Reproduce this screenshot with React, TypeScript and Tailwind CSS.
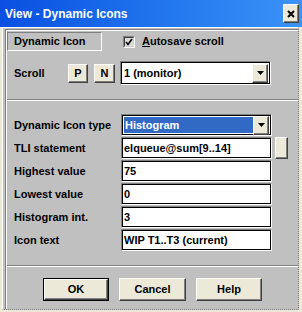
import React from "react";

const font = { fontFamily: '"Liberation Sans", Arial, sans-serif' };

const raised =
  "bg-[#ECE9D8] border border-white border-r-[#404040] border-b-[#404040] shadow-[inset_-1px_-1px_0_#808080]";

function Arrow() {
  return (
    <div className={`${raised} w-[16px] h-[19px] flex items-center justify-center shrink-0`}>
      <svg width="7" height="4" viewBox="0 0 7 4">
        <polygon points="0,0 7,0 3.5,4" fill="#000" />
      </svg>
    </div>
  );
}

function Combo({ text, selected, h }: { text: string; selected?: boolean; h: string }) {
  return (
    <div className={`w-[151px] ${h} border border-[#808080] border-r-white border-b-white flex`}>
      <div className="flex-1 border border-black bg-white flex items-center pl-[1px] pr-[1px]">
        <div
          className={`flex-1 h-[16px] flex items-center pl-[1px] text-[11px] font-bold ${
            selected ? "bg-[#316AC5] text-white" : "text-black"
          }`}
        >
          {text}
        </div>
        <Arrow />
      </div>
    </div>
  );
}

function Field({ text }: { text: string }) {
  return (
    <div className="w-[151px] h-[22px] border border-[#808080] border-r-white border-b-white flex">
      <div className="flex-1 border border-black bg-white flex items-center pl-[1px] text-[11px] font-bold text-black">
        {text}
      </div>
    </div>
  );
}

function Row({ label, children }: { label: string; children: React.ReactNode }) {
  return (
    <div className="flex items-center h-[22px] pl-[7px]">
      <div className="w-[107px] text-[11px] font-bold text-black">{label}</div>
      {children}
    </div>
  );
}

export default function App() {
  return (
    <div className="w-[302px] h-[312px] bg-[#ECE9D8] flex flex-col select-none" style={font}>
      {/* Title bar */}
      <div className="h-[27px] bg-gradient-to-r from-[#0a4fe2] to-[#3b93f7] flex items-center pl-[5px] pr-[3px]">
        <div className="flex-1 text-white text-[12px] font-bold">View - Dynamic Icons</div>
        <div className={`${raised} w-[16px] h-[19px] flex items-center justify-center`}>
          <svg width="8" height="8" viewBox="0 0 8 8">
            <path d="M1 1 L7 7 M7 1 L1 7" stroke="#000" strokeWidth="2" />
          </svg>
        </div>
      </div>

      {/* Body */}
      <div className="flex-1 flex flex-col ml-[2px] mr-[3px] mb-[2px] bg-[#c0c0c0] border border-dotted border-[#808080] border-l-white border-t-white [border-left-style:solid] [border-top-style:solid] pl-[2px] pt-[1px]">
        <div className="flex-1 flex flex-col border-l border-t border-[#808080]">
          <div className="flex-1 flex flex-col border-l border-t border-white">
            {/* Section 1 */}
            <div className="h-[68px] flex flex-col">
              <div className="flex items-center mt-[1px]">
                <div className="w-[95px] h-[19px] border border-[#808080] border-r-white border-b-white flex items-center pl-[6px] text-[11px] font-bold text-black">
                  Dynamic Icon
                </div>
                <div className="ml-[21px] flex items-center">
                  <div className="w-[12px] h-[12px] border border-[#808080] border-r-white border-b-white">
                    <div className="w-full h-full border border-[#404040] border-r-[#d4d0c8] border-b-[#d4d0c8] bg-[#dcdcdc] flex items-center justify-center">
                      <svg width="8" height="8" viewBox="0 0 8 8">
                        <polyline points="1,4 3,6.5 7,1" fill="none" stroke="#000" strokeWidth="1.6" />
                      </svg>
                    </div>
                  </div>
                  <div className="ml-[7px] text-[11px] font-bold text-black">
                    <span className="underline">A</span>utosave scroll
                  </div>
                </div>
              </div>
              <div className="flex items-center mt-[10px] pl-[7px] h-[24px]">
                <div className="w-[54px] text-[11px] font-bold text-black">Scroll</div>
                <div className={`${raised} w-[20px] h-[19px] flex items-center justify-center text-[11px] font-bold text-black`}>
                  P
                </div>
                <div className={`${raised} ml-[6px] w-[21px] h-[19px] flex items-center justify-center text-[11px] font-bold text-black`}>
                  N
                </div>
                <div className="ml-[5px]">
                  <Combo text="1 (monitor)" h="h-[24px]" />
                </div>
              </div>
            </div>

            <div className="h-px bg-[#808080]" />
            <div className="h-px bg-white" />

            {/* Section 2 */}
            <div className="h-[164px] flex flex-col gap-px pt-[13px]">
              <Row label="Dynamic Icon type">
                <Combo text="Histogram" selected h="h-[22px]" />
              </Row>
              <Row label="TLI statement">
                <Field text="elqueue@sum[9..14]" />
                <div className={`${raised} ml-[3px] w-[13px] h-[22px]`} />
              </Row>
              <Row label="Highest value">
                <Field text="75" />
              </Row>
              <Row label="Lowest value">
                <Field text="0" />
              </Row>
              <Row label="Histogram int.">
                <Field text="3" />
              </Row>
              <Row label="Icon text">
                <Field text="WIP T1..T3 (current)" />
              </Row>
            </div>

            <div className="h-px bg-[#808080]" />
            <div className="h-px bg-white" />

            {/* Section 3 */}
            <div className="flex-1 flex justify-center items-start pt-[11px] gap-[10px]">
              <div className="w-[66px] h-[23px] border border-black flex">
                <div className={`${raised} flex-1 flex items-center justify-center text-[11px] font-bold text-black`}>
                  OK
                </div>
              </div>
              <div className={`${raised} w-[67px] h-[23px] flex items-center justify-center text-[11px] font-bold text-black`}>
                Cancel
              </div>
              <div className={`${raised} w-[66px] h-[23px] flex items-center justify-center text-[11px] font-bold text-black`}>
                Help
              </div>
            </div>
          </div>
        </div>
      </div>
    </div>
  );
}
